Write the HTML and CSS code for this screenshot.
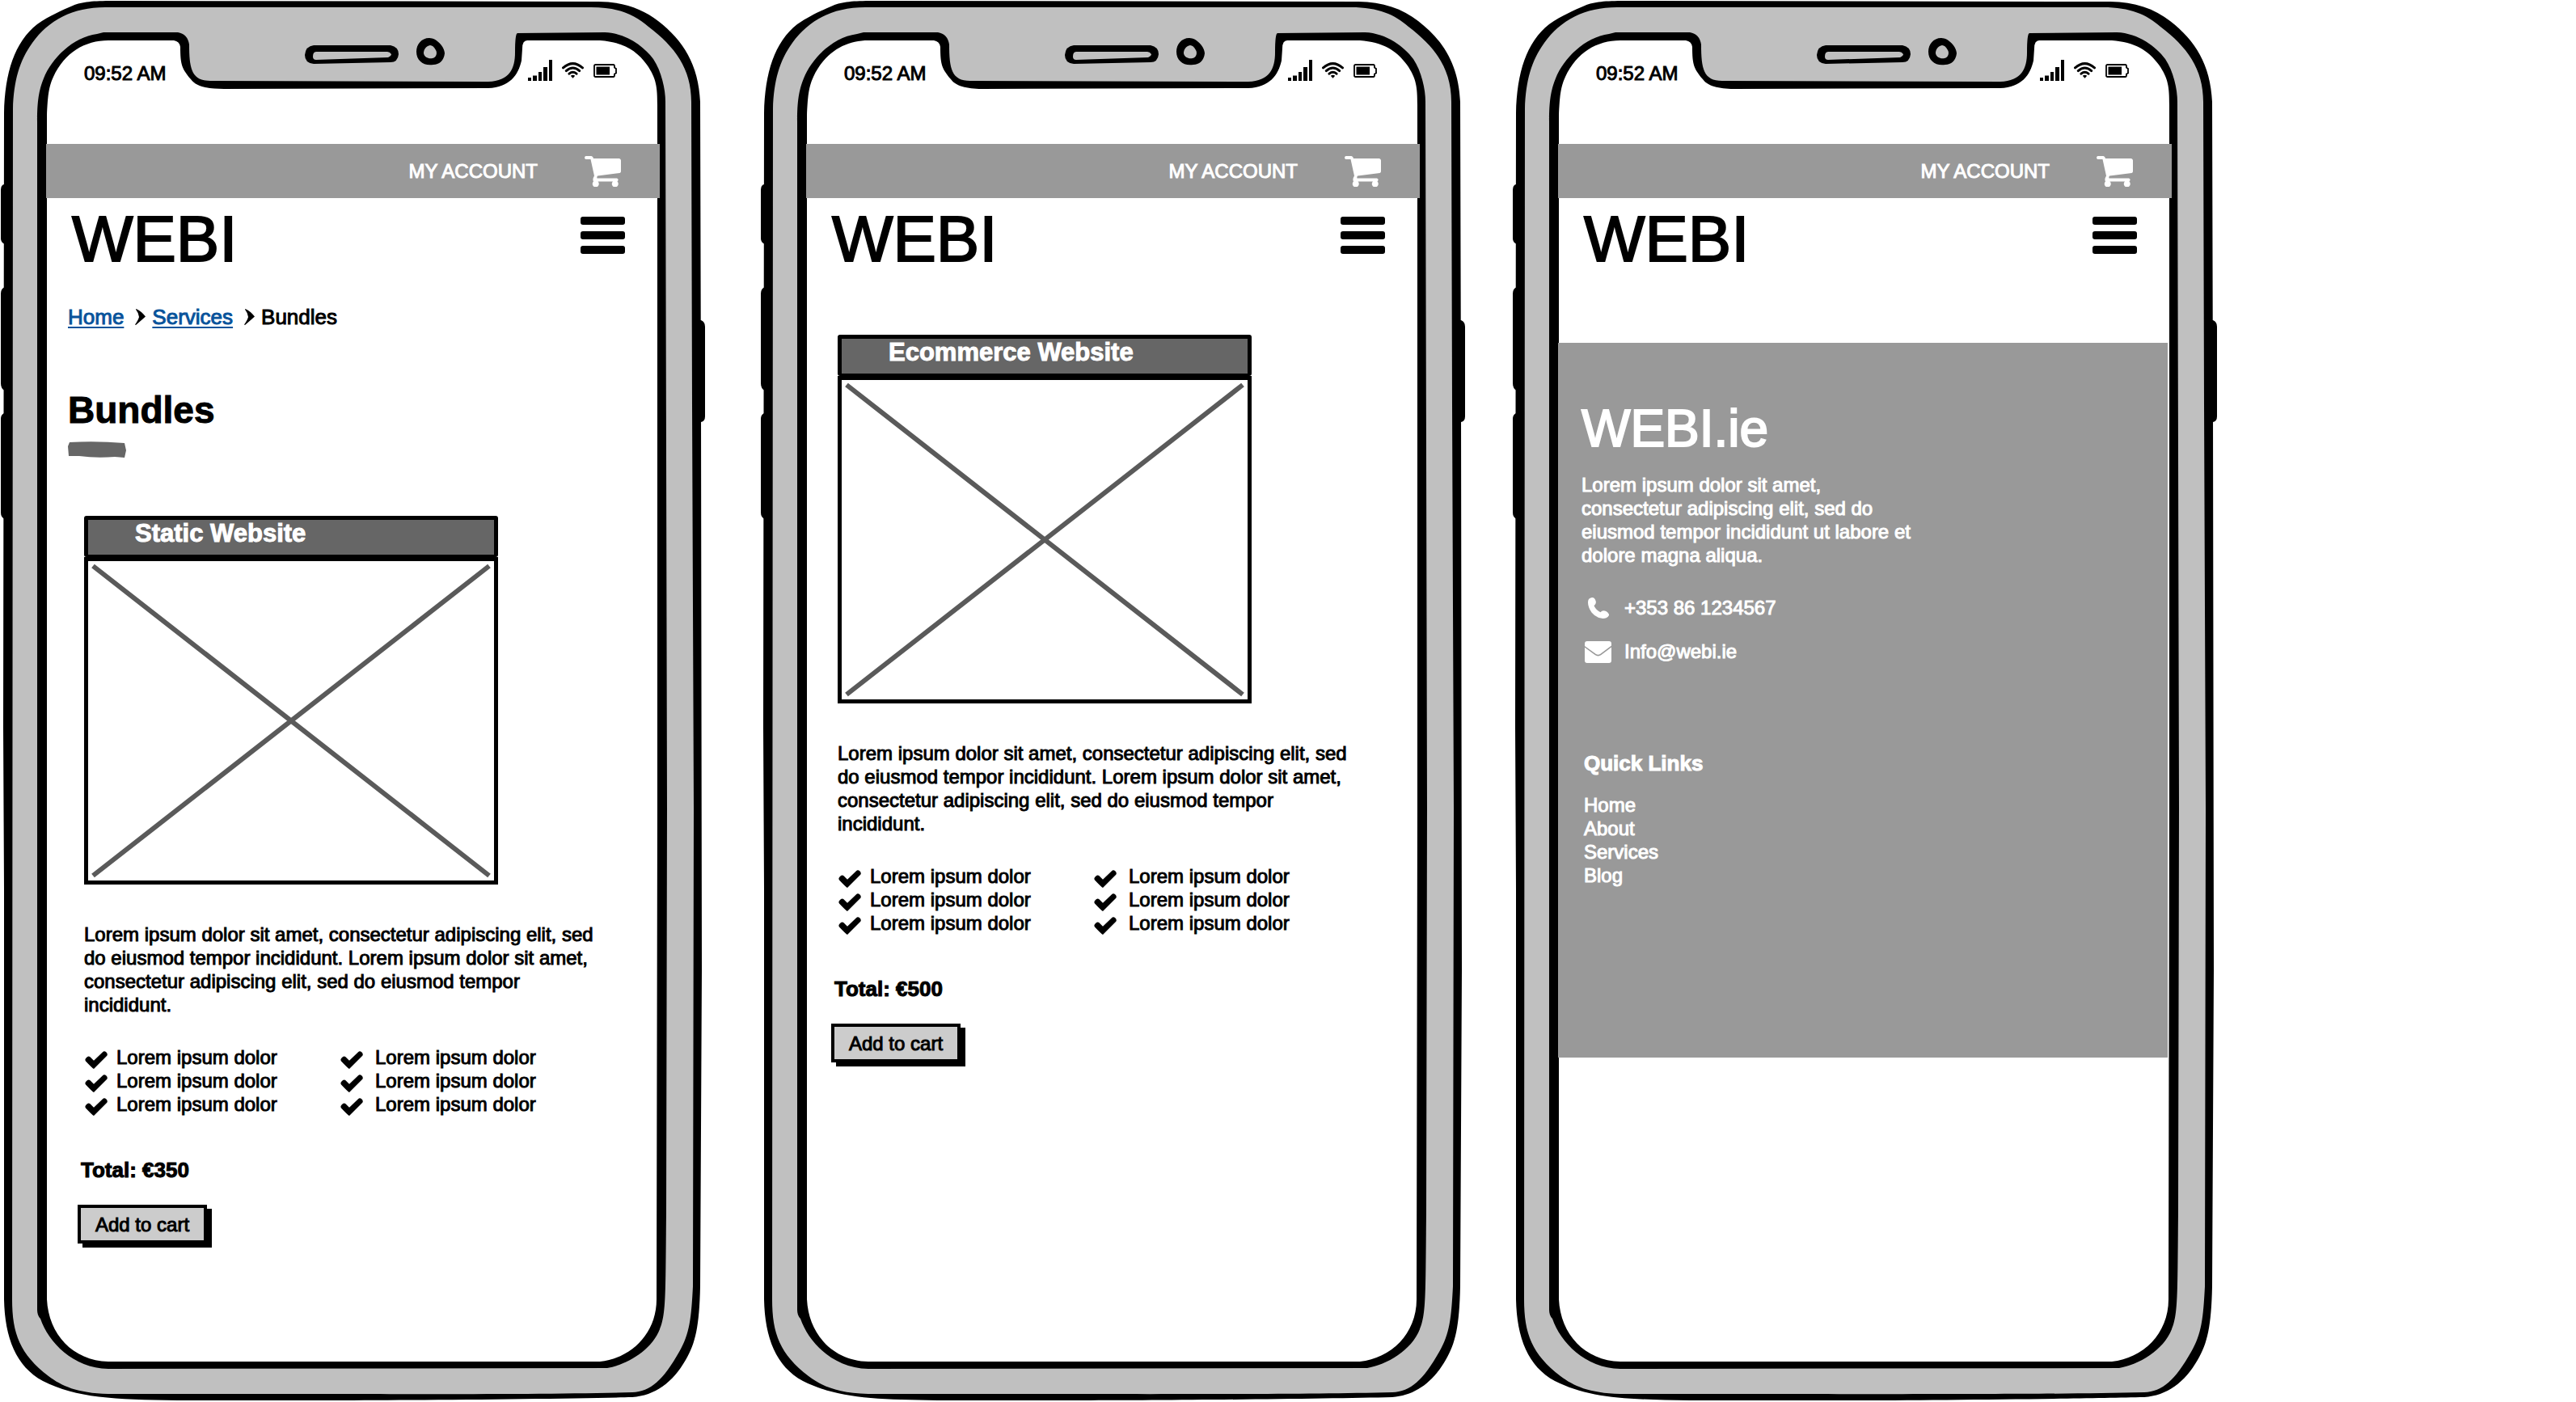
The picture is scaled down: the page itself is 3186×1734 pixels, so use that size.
FILE: index.html
```html
<!DOCTYPE html>
<html lang="en">
<head>
<meta charset="utf-8">
<meta name="viewport" content="width=device-width, initial-scale=1">
<title>WEBI – Bundles</title>
<link rel="stylesheet" href="styles.css">
</head>
<body>
<svg class="sprite" aria-hidden="true">
  <symbol id="frame" viewBox="0 0 875 1734" preserveAspectRatio="none">
    <path d="M9 228H5Q1 229 1 235V295Q1 300 6 302H9ZM9 355H6Q1 357 1 363V474Q1 481 6 483H9ZM9 511H5Q1 513 1 518V634Q1 640 6 642H9ZM862 396H867Q872 398 872 404V515Q872 521 867 522H862Z"/>
    <path d="M5 140C6 90 18 52 46 30C62 19 76 13 90 7C102 2 115 1 140 1L740 2C770 2 795 11 814 26C845 50 864 80 866 126L867 500L868 1200L866 1591C865 1640 860 1662 848 1682C832 1710 810 1726 782 1728C700 1730 500 1732 400 1732L220 1732C140 1731 95 1729 53 1708C20 1690 6 1655 5 1607L5 1100L4 900Z"/>
    <path fill="#c0c0c0" d="M16 135C17 100 24 75 40 53C60 25 90 9 130 9L731 9C765 9 785 18 802 33C835 58 855 85 855 126L856 500L858 1000L857 1591C855 1630 853 1650 840 1672C820 1707 805 1721 782 1722C650 1725 500 1724 134 1724C95 1723 76 1714 60 1702C25 1675 15 1650 15 1607Z"/>
    <path d="M46 150C46 125 48 112 54 97C64 72 90 46 120 42L128 40H220Q232 42 234 55C234 85 237 100 260 100L604 101C630 100 637 85 637 65Q637 41 640 41L748 40C775 41 797 58 808 73C818 88 823 110 823 126L825 1000L824 1500C823 1600 824 1625 816 1644C806 1670 775 1688 751 1692L134 1693C90 1692 60 1660 50 1631Q46 1627 46 1620Z"/>
    <path fill="#fff" d="M58 143C59 120 60 108 66 95C80 65 105 50 134 50H215Q222 51 223 58C223 80 225 85 236 98C243 108 260 110 277 110L604 109C630 108 641 93 645 75L646 60Q646 50 652 50H742C770 52 787 62 800 80C812 97 813 108 813 130V1000L812 1607C812 1650 780 1680 742 1684H134C90 1683 60 1650 58 1607Z"/>
    <path fill-rule="evenodd" d="M388 56H483Q493 58 493 67Q492 77 483 77L388 79Q377 78 377 68Q378 57 388 56ZM391 64Q387 64 387 70Q387 74 391 74L480 71Q484 69 484 67Q482 64 479 64Z"/>
    <path fill-rule="evenodd" d="M531 47C540 47 550 58 550 66C549 75 543 80 536 80C524 82 515 75 515 64C515 55 521 47 531 47ZM532 56C527 57 524 61 524 66C525 71 530 73 535 72C540 71 541 65 539 62Q536 56 532 56Z"/>
  </symbol>
  <symbol id="signal" viewBox="0 0 30 26">
    <path d="M0 22h4v4H0zM6 19.500h5V26H6zM13 15h4v11h-4zM19 9h5v17h-5zM26 0h4v26h-4z"/>
  </symbol>
  <symbol id="wifi" viewBox="0 0 27 20">
    <g fill="none" stroke="#000" stroke-width="3" stroke-linecap="round"><path d="M1.500 6.800Q13.500-3.500 25.500 6.800M5.300 10.600Q13.500 3.500 21.700 10.600M9 14.200Q13.500 10.400 18 14.200"/></g>
    <path d="M10.800 16.700Q13.500 14.800 16.200 16.700L13.500 19.800Z"/>
  </symbol>
  <symbol id="battery" viewBox="0 0 29 17">
    <path d="M2.500 1H24.500Q26 1 26 3V4.500L28 6V11.500L26 12.500V14Q26 16 24.500 16H2.500Q1 16 1 14.500V2.500Q1 1 2.500 1Z" fill="none" stroke="#000" stroke-width="1.800"/><path d="M3.500 3.500H20V13.500H3.500Z"/>
  </symbol>
  <symbol id="cart" viewBox="0 0 45 38">
    <path fill="#fff" d="M1.500 0H8.500Q10.500 .3 11 3L43 3Q45 3.500 45 5.500V19Q45 20.500 43.500 21L16 24.500Q15 26 15.500 27.500H40Q42 28 41.500 30L40.500 31.500A4 4 0 1 1 35 31.500H16.500A4 4 0 1 1 11 31.500Q9.800 29 11 26.500L12 24.500L7.500 4H1.500Q0 3.500 0 2T1.500 0Z"/>
  </symbol>
  <symbol id="chevron" viewBox="0 0 13 20">
    <path d="M1.500 0Q8 3 13 9.500Q8 14 1 20L0 19.500Q4 14 5 10Q4.500 5 1 .7Z"/>
  </symbol>
  <symbol id="check" viewBox="0 0 28 22">
    <path d="M11 22Q9.500 21.500 1 12.500Q-.5 10.500 1.500 8.500Q4 5.500 6.500 7.200L11 11.800L22 1.200Q24 -.8 26.500 1.500Q28.800 4 27 6Z"/>
  </symbol>
  <symbol id="phone" viewBox="0 0 26 26">
    <path fill="#fff" d="M0 6Q0 1 4 0.200Q8 -.8 9.500 4Q10.800 8 7.500 10.200Q10 15.500 15.500 18.200Q18 14.800 22.500 17Q26.500 19.500 26 22Q24 26 18.500 26Q10 25.500 4.500 18.500Q0 12 0 6Z"/>
  </symbol>
  <symbol id="mail" viewBox="0 0 33 27">
    <path fill="#fff" d="M3 0H30Q33 0 33 3V5.500L19 16Q16.500 17.500 14 16L0 6V3Q0 0 3 0ZM0 7.800L13 17.300Q16.500 19.500 20 17.300L33 7.500V24Q33 27 30 27H3Q0 27 0 24Z"/>
  </symbol>
</svg>

<main class="board">
  <section class="phone">
    <svg class="frame" aria-hidden="true"><use href="#frame"/></svg>
    <div class="screen">
      <div class="status">
        <time>09:52 AM</time>
        <div class="indicators">
          <svg width="30" height="26"><use href="#signal"/></svg>
          <svg width="27" height="20"><use href="#wifi"/></svg>
          <svg width="29" height="17"><use href="#battery"/></svg>
        </div>
      </div>
      <div class="account-bar">
        <a href="#account">MY ACCOUNT</a>
        <a href="#cart" aria-label="Cart"><svg width="45" height="38"><use href="#cart"/></svg></a>
      </div>
      <header class="site-header">
        <a class="logo" href="#home">WEBI</a>
        <button class="menu" type="button" aria-label="Menu"><span></span><span></span><span></span></button>
      </header>
      <nav class="breadcrumb" aria-label="Breadcrumb">
        <a href="#home">Home</a>
        <svg width="13" height="20"><use href="#chevron"/></svg>
        <a href="#services">Services</a>
        <svg width="13" height="20"><use href="#chevron"/></svg>
        <span>Bundles</span>
      </nav>
      <h1 class="title">Bundles</h1>
      <svg class="title-mark" viewBox="0 0 72 20" aria-hidden="true"><path d="M2 1Q35-1 70 2L72 11L70 20L58 19Q35 21 14 18L1 18L0 6Z"/></svg>
      <article class="product">
        <div class="card">
          <h2>Static Website</h2>
          <svg class="placeholder" viewBox="0 0 502 395" preserveAspectRatio="none" role="img" aria-label="Image placeholder"><path d="M6 6L496 389M496 6L6 389"/></svg>
        </div>
        <p class="copy">Lorem ipsum dolor sit amet, consectetur adipiscing elit, sed do eiusmod tempor incididunt. Lorem ipsum dolor sit amet, consectetur adipiscing elit, sed do eiusmod tempor incididunt.</p>
        <div class="features">
          <ul>
            <li><svg width="28" height="22"><use href="#check"/></svg>Lorem ipsum dolor</li>
            <li><svg width="28" height="22"><use href="#check"/></svg>Lorem ipsum dolor</li>
            <li><svg width="28" height="22"><use href="#check"/></svg>Lorem ipsum dolor</li>
          </ul>
          <ul class="roomy">
            <li><svg width="28" height="22"><use href="#check"/></svg>Lorem ipsum dolor</li>
            <li><svg width="28" height="22"><use href="#check"/></svg>Lorem ipsum dolor</li>
            <li><svg width="28" height="22"><use href="#check"/></svg>Lorem ipsum dolor</li>
          </ul>
        </div>
        <p class="total">Total: €350</p>
        <button class="add" type="button">Add to cart</button>
      </article>
    </div>
  </section>

  <section class="phone">
    <svg class="frame" aria-hidden="true"><use href="#frame"/></svg>
    <div class="screen">
      <div class="status">
        <time>09:52 AM</time>
        <div class="indicators">
          <svg width="30" height="26"><use href="#signal"/></svg>
          <svg width="27" height="20"><use href="#wifi"/></svg>
          <svg width="29" height="17"><use href="#battery"/></svg>
        </div>
      </div>
      <div class="account-bar">
        <a href="#account">MY ACCOUNT</a>
        <a href="#cart" aria-label="Cart"><svg width="45" height="38"><use href="#cart"/></svg></a>
      </div>
      <header class="site-header">
        <a class="logo" href="#home">WEBI</a>
        <button class="menu" type="button" aria-label="Menu"><span></span><span></span><span></span></button>
      </header>
      <article class="product product-next">
        <div class="card">
          <h2>Ecommerce Website</h2>
          <svg class="placeholder" viewBox="0 0 502 395" preserveAspectRatio="none" role="img" aria-label="Image placeholder"><path d="M6 6L496 389M496 6L6 389"/></svg>
        </div>
        <p class="copy">Lorem ipsum dolor sit amet, consectetur adipiscing elit, sed do eiusmod tempor incididunt. Lorem ipsum dolor sit amet, consectetur adipiscing elit, sed do eiusmod tempor incididunt.</p>
        <div class="features">
          <ul>
            <li><svg width="28" height="22"><use href="#check"/></svg>Lorem ipsum dolor</li>
            <li><svg width="28" height="22"><use href="#check"/></svg>Lorem ipsum dolor</li>
            <li><svg width="28" height="22"><use href="#check"/></svg>Lorem ipsum dolor</li>
          </ul>
          <ul class="roomy">
            <li><svg width="28" height="22"><use href="#check"/></svg>Lorem ipsum dolor</li>
            <li><svg width="28" height="22"><use href="#check"/></svg>Lorem ipsum dolor</li>
            <li><svg width="28" height="22"><use href="#check"/></svg>Lorem ipsum dolor</li>
          </ul>
        </div>
        <p class="total">Total: €500</p>
        <button class="add" type="button">Add to cart</button>
      </article>
    </div>
  </section>

  <section class="phone">
    <svg class="frame" aria-hidden="true"><use href="#frame"/></svg>
    <div class="screen">
      <div class="status">
        <time>09:52 AM</time>
        <div class="indicators">
          <svg width="30" height="26"><use href="#signal"/></svg>
          <svg width="27" height="20"><use href="#wifi"/></svg>
          <svg width="29" height="17"><use href="#battery"/></svg>
        </div>
      </div>
      <div class="account-bar">
        <a href="#account">MY ACCOUNT</a>
        <a href="#cart" aria-label="Cart"><svg width="45" height="38"><use href="#cart"/></svg></a>
      </div>
      <header class="site-header">
        <a class="logo" href="#home">WEBI</a>
        <button class="menu" type="button" aria-label="Menu"><span></span><span></span><span></span></button>
      </header>
      <footer class="site-footer">
        <h2 class="brand">WEBI.ie</h2>
        <p class="about">Lorem ipsum dolor sit amet, consectetur adipiscing elit, sed do eiusmod tempor incididunt ut labore et dolore magna aliqua.</p>
        <address class="contact">
          <a href="tel:+353861234567"><svg width="26" height="26"><use href="#phone"/></svg>+353 86 1234567</a>
          <a href="mailto:Info@webi.ie"><svg width="33" height="27"><use href="#mail"/></svg>Info@webi.ie</a>
        </address>
        <nav class="links" aria-labelledby="quick-links">
          <h3 id="quick-links">Quick Links</h3>
          <a href="#home">Home</a>
          <a href="#about">About</a>
          <a href="#services">Services</a>
          <a href="#blog">Blog</a>
        </nav>
      </footer>
    </div>
  </section>
</main>
</body>
</html>
```
FILE: styles.css
```css
* {
  box-sizing: border-box;
}

body {
  margin: 0;
  background: #fff;
  color: #000;
  font: 24px/29px "Liberation Sans", Arial, sans-serif;
  -webkit-text-stroke: 1px;
}

h1, h2, h3, p, ul {
  margin: 0;
  padding: 0;
}

a {
  color: inherit;
  text-decoration: none;
}

button {
  font: inherit;
  color: inherit;
}

svg {
  display: block;
  flex: none;
}

.sprite {
  position: absolute;
  width: 0;
  height: 0;
}

/* three phones side by side, with uneven gutters and a free right margin */
.board {
  display: grid;
  grid-template-columns: 875fr 65fr 875fr 55fr 875fr 441fr;
}

.phone {
  position: relative;
  min-height: 100vh;
}

.phone:nth-child(2) {
  grid-column: 3;
}

.phone:nth-child(3) {
  grid-column: 5;
}

.frame {
  position: absolute;
  inset: 0;
  width: 100%;
  height: 100%;
}

.screen {
  position: relative;
  padding: 0 59px 60px 57px;
}

.status {
  display: flex;
  justify-content: space-between;
  padding: 76px 53px 73px 47px;
}

.indicators {
  display: flex;
  align-items: center;
  gap: 12px;
  height: 22px;
}

.account-bar {
  display: flex;
  align-items: center;
  justify-content: flex-end;
  gap: 58px;
  height: 67px;
  padding-right: 48px;
  background: #999;
  color: #fff;
}

.site-header {
  display: flex;
  align-items: flex-start;
  justify-content: space-between;
  padding: 11px 43px 0 32px;
}

.logo {
  font-size: 80px;
  line-height: 80px;
  -webkit-text-stroke: 2px;
}

.menu {
  display: flex;
  flex-direction: column;
  gap: 8px;
  width: 55px;
  margin-top: 12px;
  padding: 0;
  border: 0;
  background: none;
}

.menu span {
  height: 10px;
  border-radius: 3px;
  background: #000;
}

.breadcrumb {
  display: flex;
  align-items: center;
  margin-top: 41px;
  padding-left: 27px;
  font-size: 26px;
  line-height: 30px;
}

.breadcrumb a {
  color: #08539b;
  text-decoration: underline 2px;
  text-underline-offset: 3px;
}

.breadcrumb svg {
  margin: 0 8px 0 14px;
}

.title {
  margin: 75px 0 14px 27px;
  font-size: 46px;
  line-height: 50px;
}

.title-mark {
  width: 72px;
  height: 20px;
  margin-left: 27px;
  fill: #666;
}

.product {
  margin: 72px 0 0 39px;
}

.product-next {
  margin: 78px 0 0 31px;
}

.card {
  width: 512px;
  max-width: 100%;
  margin-left: 8px;
}

.card h2 {
  height: 51px;
  padding-left: 58px;
  border: 5px solid #000;
  border-bottom-width: 3px;
  border-radius: 3px;
  background: #666;
  color: #fff;
  font-size: 31px;
  line-height: 34px;
}

.placeholder {
  width: 100%;
  height: 405px;
  border: 5px solid #000;
  stroke: #5a5a5a;
  stroke-width: 6px;
}

.copy {
  max-width: 656px;
  margin: 47px 0 36px;
  padding-left: 8px;
}

.features {
  display: grid;
  grid-template-columns: 316px 1fr;
  padding-left: 9px;
}

.features ul {
  list-style: none;
}

.features li {
  display: grid;
  grid-template-columns: 39px 1fr;
}

.features .roomy li {
  grid-template-columns: 43px 1fr;
}

.features svg {
  margin-top: 7px;
}

.total {
  margin: 52px 0 28px;
  padding-left: 4px;
  font-size: 26px;
  font-weight: bold;
  line-height: 30px;
}

.add {
  display: block;
  height: 48px;
  padding: 0 18px;
  border: 4px solid #000;
  background: #ccc;
  box-shadow: 6px 5px 0 #000;
}

.site-footer {
  margin: 88px 5px 0 0;
  padding: 74px 28px 211px 29px;
  background: #999;
  color: #fff;
}

.brand {
  font-size: 64px;
  font-weight: normal;
  line-height: 64px;
  -webkit-text-stroke: 2px;
}

.about {
  max-width: 420px;
  margin: 23px 0 36px;
}

.contact {
  display: grid;
  gap: 24px;
  padding-left: 4px;
  font-style: normal;
  line-height: 30px;
}

.contact a {
  display: grid;
  grid-template-columns: 33px 1fr;
  gap: 16px;
  align-items: center;
}

.contact svg {
  justify-self: center;
}

.links {
  display: flex;
  flex-direction: column;
  align-items: flex-start;
  margin-top: 108px;
  padding-left: 3px;
}

.links h3 {
  margin-bottom: 22px;
  font-size: 26px;
  line-height: 30px;
}
```
